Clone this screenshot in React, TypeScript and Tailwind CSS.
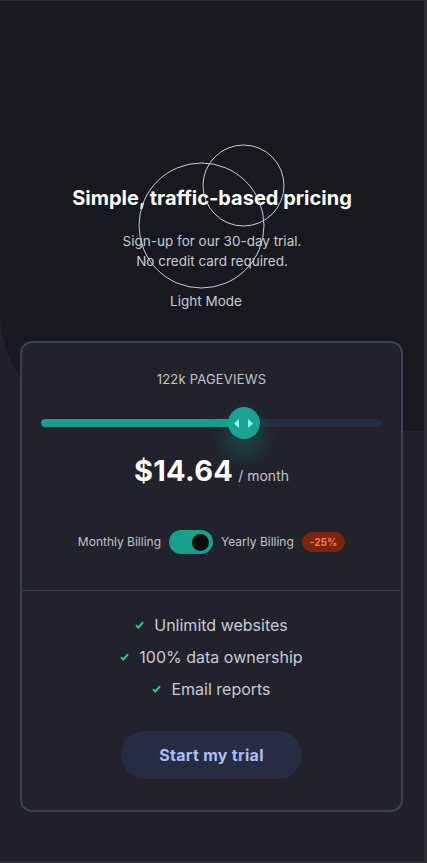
import { useState } from "react";

const features = ["Unlimitd websites", "100% data ownership", "Email reports"];

const CheckIcon = () => (
  <svg width="9" height="8" viewBox="0 0 9 8" fill="none">
    <path d="M1 4.2L3.4 6.5L8 1.2" stroke="#1bc9b0" strokeWidth="2" />
  </svg>
);

const PricingPage = () => {
  const [yearly, setYearly] = useState(true);
  const percent = 59.4;

  return (
    <div
      className="h-[863px] overflow-hidden border-t border-b-2 border-r-[3px] border-[#2b2c30] bg-[#21212b]"
      style={{ fontFamily: "Inter, 'Noto Sans', sans-serif" }}
    >
      <div className="relative h-[430px] rounded-bl-[120px] bg-[#18191f] pt-[183px] text-center">
        <svg
          className="pointer-events-none absolute left-0 top-[142px]"
          width="300"
          height="150"
          viewBox="0 142 300 150"
          fill="none"
        >
          <circle cx="201.5" cy="224.5" r="62.5" stroke="#c9cce0" strokeWidth="1" />
          <circle cx="243.5" cy="184.5" r="40.5" stroke="#c9cce0" strokeWidth="1" />
        </svg>
        <h1 className="text-[20px] leading-[28px] font-bold text-white">
          Simple, traffic-based pricing
        </h1>
        <p className="mt-[19px] text-[13.5px] leading-[20px] text-[#c9cad2]">
          Sign-up for our 30-day trial.
          <br />
          No credit card required.
        </p>
        <p className="mt-[20px] pr-[12px] text-[13.5px] leading-[20px] text-[#c9cad2]">
          Light Mode
        </p>
      </div>

      <div className="relative mx-[20px] -mt-[90px] h-[471px] w-[383px] rounded-[12px] border-2 border-[#394152] bg-[#21222c]">
        <p className="pt-[26px] text-center text-[13px] leading-[20px] tracking-[0.2px] text-[#c2c3cb]">
          122k PAGEVIEWS
        </p>

        <div className="relative mx-[19px] mt-[18px] flex h-[32px] items-center">
          <div className="h-[8px] w-full overflow-hidden rounded-full bg-[#262c40]">
            <div className="h-full rounded-full bg-[#16a08e]" style={{ width: `${percent}%` }} />
          </div>
          <div
            className="absolute top-0 flex h-[32px] w-[32px] -translate-x-1/2 items-center justify-center gap-[9px] rounded-full bg-[#1aa393] shadow-[0_14px_26px_rgba(26,163,147,0.45)]"
            style={{ left: `${percent}%` }}
          >
            <svg width="5" height="9" viewBox="0 0 5 9">
              <path d="M5 0V9L0 4.5Z" fill="#84fbef" />
            </svg>
            <svg width="5" height="9" viewBox="0 0 5 9">
              <path d="M0 0V9L5 4.5Z" fill="#84fbef" />
            </svg>
          </div>
        </div>

        <div className="mt-[12px] flex items-baseline justify-center gap-[5px]">
          <span className="text-[29px] leading-[40px] font-bold tracking-[0.3px] text-white">
            $14.64
          </span>
          <span className="text-[14px] text-[#c2c3cb]">/ month</span>
        </div>

        <div className="mt-[39px] flex items-center justify-center gap-[8px] text-[12px] text-[#c2c3cb]">
          <span>Monthly Billing</span>
          <button
            type="button"
            onClick={() => setYearly(!yearly)}
            className={`flex h-[24px] w-[44px] items-center rounded-full bg-[#16a08e] px-[4px] ${
              yearly ? "justify-end" : "justify-start"
            }`}
          >
            <span className="h-[17px] w-[17px] rounded-full bg-[#0b0b0d]" />
          </button>
          <span>Yearly Billing</span>
          <span className="rounded-full bg-[#7b2510] px-[8px] py-[3px] text-[10px] font-bold leading-[14px] text-[#ff7a4c]">
            -25%
          </span>
        </div>

        <div className="mt-[36px] h-px w-full bg-[#3a3f4e]" />

        <ul className="mt-[22px] flex flex-col items-center gap-[8px]">
          {features.map((feature) => (
            <li
              key={feature}
              className="flex items-center gap-[10px] text-[16px] leading-[24px] text-[#c9cad3]"
            >
              <CheckIcon />
              {feature}
            </li>
          ))}
        </ul>

        <div className="mt-[30px] flex justify-center">
          <button
            type="button"
            className="h-[48px] w-[181px] rounded-full bg-[#262d42] text-[16px] font-bold tracking-[0.3px] text-[#aebcf6]"
          >
            Start my trial
          </button>
        </div>
      </div>
    </div>
  );
};

export default function App() {
  return <PricingPage />;
}
